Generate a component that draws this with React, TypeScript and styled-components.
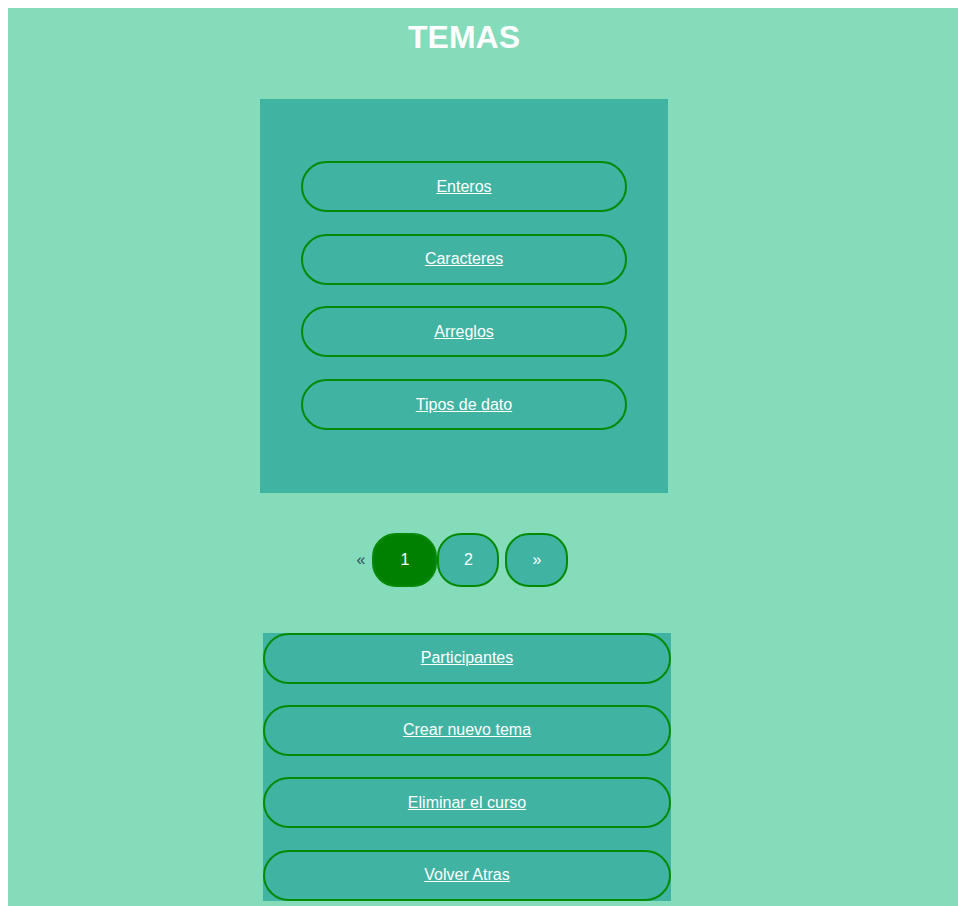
import React from 'react';
import styled, { createGlobalStyle } from 'styled-components';

const GlobalStyle = createGlobalStyle`
  body {
    margin: 8px 0 0 8px;
    background: #ffffff;
    font-family: "Liberation Sans", Arial, sans-serif;
  }
`;

const Page = styled.div`
  background-color: #85dcba;
  padding: 11px 38px 40px 0;
  display: flex;
  flex-direction: column;
  align-items: center;
`;

const Title = styled.h1`
  margin: 0;
  font-size: 32px;
  font-weight: bold;
  color: #ffffff;
  line-height: 37px;
`;

const Panel = styled.div<{ $padded?: boolean; $shift?: number; $gap: number }>`
  width: 408px;
  box-sizing: border-box;
  background-color: #41b3a3;
  display: flex;
  flex-direction: column;
  gap: ${({ $gap }) => $gap}px;
  padding: ${({ $padded }) => ($padded ? '62px 41px 62.5px' : '0')};
  margin-left: ${({ $shift }) => $shift ?? 0}px;
`;

const TopicPanel = styled(Panel)`
  margin-top: 43px;
`;

const ActionPanel = styled(Panel)`
  margin-top: 46px;
`;

const PillLink = styled.a`
  height: 51px;
  box-sizing: border-box;
  border: 2px solid #058a05;
  border-radius: 26px;
  display: flex;
  align-items: center;
  justify-content: center;
  color: #ffffff;
  font-size: 16px;
  text-decoration: underline;
  cursor: pointer;
`;

const Pager = styled.nav`
  margin-top: 40px;
  margin-right: 3px;
  display: flex;
  align-items: center;
`;

const PagerPrev = styled.span`
  color: #34495e;
  font-size: 16px;
  margin-right: 7px;
`;

const PageButton = styled.a<{ $active?: boolean; $width: number; $gapLeft?: number }>`
  width: ${({ $width }) => $width}px;
  height: 54px;
  box-sizing: border-box;
  margin-left: ${({ $gapLeft }) => $gapLeft ?? 0}px;
  border: 2px solid #058a05;
  border-radius: 24px;
  background-color: ${({ $active }) => ($active ? '#008000' : '#41b3a3')};
  color: #ffffff;
  font-size: 16px;
  display: flex;
  align-items: center;
  justify-content: center;
  cursor: pointer;
`;

const topics = ['Enteros', 'Caracteres', 'Arreglos', 'Tipos de dato'];
const actions = ['Participantes', 'Crear nuevo tema', 'Eliminar el curso', 'Volver Atras'];

export default function App() {
  return (
    <>
      <GlobalStyle />
      <Page>
        <Title>TEMAS</Title>

        <TopicPanel $padded $gap={21.7}>
          {topics.map((t) => (
            <PillLink key={t}>{t}</PillLink>
          ))}
        </TopicPanel>

        <Pager>
          <PagerPrev>«</PagerPrev>
          <PageButton $active $width={65}>1</PageButton>
          <PageButton $width={62}>2</PageButton>
          <PageButton $width={63} $gapLeft={6}>»</PageButton>
        </Pager>

        <ActionPanel $shift={6} $gap={21.4}>
          {actions.map((a) => (
            <PillLink key={a}>{a}</PillLink>
          ))}
        </ActionPanel>
      </Page>
    </>
  );
}
